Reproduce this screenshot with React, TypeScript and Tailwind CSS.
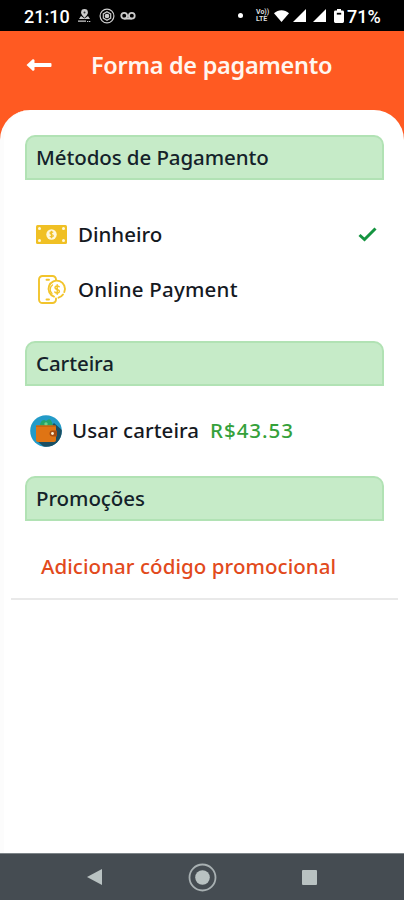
import type { ReactNode } from "react";

function StatusBar() {
  return (
    <div className="flex h-[31px] shrink-0 items-center bg-black pl-6 text-white">
      <span className="w-[53px] pt-[2px] font-['Roboto',sans-serif] text-[18px] font-medium leading-none">21:10</span>
      <svg className="h-[14px] w-[15px]" viewBox="0 0 15 14" fill="#ccc">
        <path d="M7.500 0a3.400 3.400 0 0 0-3.400 3.400c0 2.300 3.400 5.300 3.400 5.300s3.400-3 3.400-5.300A3.400 3.400 0 0 0 7.500 0z" />
        <circle cx="7.500" cy="3.400" r="1" fill="#333" />
        <path d="M4 7 2 10h11l-2-3-3.500 2.500z" />
        <path d="M1 11.500h8v1.300H1zM10 12h1.300v1H10zM12 12h1.300v1H12z" />
      </svg>
      <svg className="ml-[7px] h-4 w-4" viewBox="0 0 16 16" fill="none" stroke="#ccc">
        <circle cx="8" cy="8" r="6.900" strokeWidth="1.200" />
        <path d="M8 3.700 11.700 5.900v4.200L8 12.300 4.300 10.100V5.900z" strokeWidth="1.200" />
        <circle cx="8" cy="8" r="2.300" fill="#ccc" stroke="none" />
      </svg>
      <svg className="ml-[5px] h-3 w-4" viewBox="0 0 16 12" fill="none" stroke="#ccc" strokeWidth="1.800">
        <circle cx="4.200" cy="5.700" r="2.900" />
        <circle cx="11.800" cy="5.700" r="2.900" />
        <path d="M4.200 8.600h7.600" />
      </svg>
      <span className="ml-[102px] h-[5px] w-[5px] rounded-full bg-white" />
      <div className="ml-[13px] flex w-[17px] flex-col font-['Roboto',sans-serif] text-[7px] font-bold leading-[7px] text-[#ddd]">
        <span>Vo))</span>
        <span>LTE</span>
      </div>
      <svg className="ml-px h-3 w-[15px]" viewBox="0 0 15 12" fill="#fff">
        <path d="M0 3.200C4.300-.9 10.700-.9 15 3.200L7.500 12z" />
      </svg>
      <svg className="ml-[4px] h-[13px] w-[13px]" viewBox="0 0 13 13" fill="#fff">
        <path d="M13 0v13H0z" />
      </svg>
      <svg className="ml-[7px] h-[13px] w-[13px]" viewBox="0 0 13 13" fill="#fff">
        <path d="M13 0v13H0z" />
      </svg>
      <svg className="ml-[8px] h-[14px] w-[10px]" viewBox="0 0 10 14" fill="#fff">
        <path d="M3 0h4v1.600h1.600A1.400 1.400 0 0 1 10 3v9.600A1.400 1.400 0 0 1 8.600 14H1.400A1.400 1.400 0 0 1 0 12.600V3a1.400 1.400 0 0 1 1.400-1.400H3z" />
        <path d="M2.800 4.700h4.400" stroke="#000" strokeWidth="1.800" />
      </svg>
      <span className="ml-[3px] pt-[2px] font-['Roboto',sans-serif] text-[18px] font-medium leading-none">71%</span>
    </div>
  );
}

function SectionTitle({ children }: { children: ReactNode }) {
  return (
    <h2 className="ml-[25px] flex h-[45px] w-[359px] items-center rounded-t-[10px] border-2 border-[#b1e2b4] bg-[#c6ebc8] pb-px pl-[9px] text-[20.5px] font-medium leading-none tracking-[-0.08px] text-[#14222a]">
      {children}
    </h2>
  );
}

function CashIcon() {
  return (
    <svg className="h-[19px] w-[31px] shrink-0" viewBox="0 0 31 19">
      <rect width="31" height="19" rx="1.500" fill="#f0c024" />
      <g fill="#fff8dc">
        <circle cx="3.500" cy="3.500" r="1.500" />
        <circle cx="27.500" cy="3.500" r="1.500" />
        <circle cx="3.500" cy="15.500" r="1.500" />
        <circle cx="27.500" cy="15.500" r="1.500" />
        <circle cx="15.500" cy="9.500" r="5.200" />
      </g>
      <path d="M17.200 7.500c-1-1-3.200-.7-3.200.6 0 1.700 3.300 1 3.300 2.700 0 1.400-2.400 1.500-3.500.5M15.500 5.800v7.400" fill="none" stroke="#f0c024" strokeWidth="1.200" />
    </svg>
  );
}

function OnlineIcon() {
  return (
    <svg className="h-[30px] w-[29px] shrink-0" viewBox="0 0 29 30" fill="none" stroke="#f2c42c" strokeWidth="1.900" strokeLinecap="round">
      <path d="M18 5V4.500A3.500 3.500 0 0 0 14.500 1h-10A3.500 3.500 0 0 0 1 4.500v20A3.500 3.500 0 0 0 4.500 28h10a3.500 3.500 0 0 0 3.500-3.500V23.500" />
      <path d="M8.500 4.700h2.500M8.500 24.500h2.500" />
      <path d="M16 21.600A8.200 8.200 0 1 1 26.300 17M25 19.500a8 8 0 0 1-4.500 3.200" />
      <path d="M14 18.500A5.500 5.500 0 0 1 14.500 10" strokeWidth="1.300" />
      <path d="M21.200 11.700c-1.200-1.300-4.200-.9-4.200 1 0 2.200 4.400 1.300 4.400 3.600 0 2-3.300 2.300-4.600.8M19.200 9.700v9.500" strokeWidth="1.500" />
    </svg>
  );
}

function WalletIcon() {
  return (
    <svg className="h-8 w-8 shrink-0" viewBox="0 0 32 32">
      <defs>
        <clipPath id="disc">
          <circle cx="16" cy="16" r="15.800" />
        </clipPath>
      </defs>
      <g clipPath="url(#disc)">
        <path d="M0 0h32v32H0z" fill="#239bc8" />
        <path d="m24 8 8 7v17H14l-7-6z" fill="#1b4f63" />
        <path d="M10 11c0-3 1.500-6 4-6 1 0 1.500 1 2.500.7C18 5 18.500 3.500 20 4.500S22.500 8 23 12H10z" fill="#25a56a" />
        <circle cx="16" cy="9" r="1.700" fill="#6fd089" />
        <path d="M6 10.500h18a2 2 0 0 1 2 2V25a2 2 0 0 1-2 2H8a2 2 0 0 1-2-2z" fill="#df7414" />
        <path d="M6 10.500h20v1.500H6z" fill="#c9640f" />
        <path d="M22.500 15.500H27v6h-4.500a3 3 0 0 1 0-6z" fill="#a74c12" />
        <circle cx="22.500" cy="18.500" r="1.400" fill="#fff3d5" />
      </g>
    </svg>
  );
}

function NavBar() {
  return (
    <nav className="flex h-[47px] shrink-0 items-center border-t border-[#7d8488] bg-[#454c52] pl-[87px]">
      <svg className="h-4 w-[15px]" viewBox="0 0 15 16" fill="#b9c2c2">
        <path d="M15 0v16L0 8z" />
      </svg>
      <svg className="ml-[86px] h-[29px] w-[29px]" viewBox="0 0 29 29">
        <circle cx="14.500" cy="14.500" r="13" fill="none" stroke="#a8b0b2" strokeWidth="1.800" />
        <circle cx="14.500" cy="14.500" r="7.300" fill="#b9c2c2" />
      </svg>
      <span className="ml-[85px] h-[15px] w-[15px] rounded-[1px] bg-[#b9c2c2]" />
    </nav>
  );
}

export default function App() {
  return (
    <div className="flex h-[900px] w-[404px] flex-col overflow-hidden bg-[#ff5a22] font-['Noto_Sans',sans-serif]">
      <StatusBar />
      <header className="flex h-[79px] shrink-0 items-start">
        <svg className="ml-[26px] mt-[27px] h-[14px] w-[26px]" viewBox="0 0 26 14" fill="#fff">
          <path d="M.500 7 7 1 8.500 2v3H24.500a1 1 0 0 1 1 1v2a1 1 0 0 1-1 1H8.500v3L7 13z" />
        </svg>
        <h1 className="ml-[39px] mt-[18px] whitespace-nowrap text-[23.5px] font-semibold leading-8 tracking-[-0.3px] text-[#fff6ef]">
          Forma de pagamento
        </h1>
      </header>

      <main className="flex-1 rounded-t-[30px] border-l-4 border-[#fcfcfc] bg-white pt-[25px] text-[#15191f]">
        <div className="-ml-1">
          <SectionTitle>Métodos de Pagamento</SectionTitle>
          <div className="mt-[26px] flex h-14 items-center pl-9">
            <CashIcon />
            <span className="ml-[11px] text-[20.5px] font-medium">Dinheiro</span>
            <svg className="ml-auto mr-[27px] h-[15px] w-[19px]" viewBox="0 0 19 15" fill="none" stroke="#159440" strokeWidth="3">
              <path d="m1.500 8 5 4.500L17.500 1.500" />
            </svg>
          </div>
          <div className="flex h-14 items-center pl-[38px]">
            <OnlineIcon />
            <span className="ml-[11px] pb-px text-[20.5px] font-medium tracking-[0.2px]">Online Payment</span>
          </div>

          <div className="mt-[23px]">
            <SectionTitle>Carteira</SectionTitle>
          </div>
          <div className="flex h-[90px] items-center pl-[30px]">
            <WalletIcon />
            <span className="ml-[10px] pb-px text-[20.5px] font-medium tracking-[0.05px]">Usar carteira</span>
            <span className="ml-[11px] pb-px text-[20.5px] font-medium tracking-[0.95px] text-[#35a13a]">R$43.53</span>
          </div>

          <SectionTitle>Promoções</SectionTitle>
          <div className="ml-[11px] mr-[6px] flex h-[79px] items-center border-b-2 border-[#e9e9e9] pl-[30px] pt-[14px]">
            <span className="text-[20.5px] font-medium tracking-[0.06px] text-[#e24a1c]">Adicionar código promocional</span>
          </div>
        </div>
      </main>
      <NavBar />
    </div>
  );
}
